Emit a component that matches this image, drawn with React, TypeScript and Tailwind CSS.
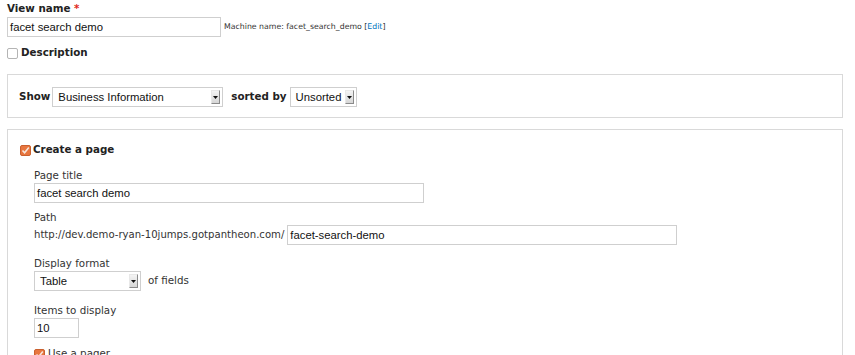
import React from "react";

const sans = { fontFamily: '"DejaVu Sans", Verdana, sans-serif' };

function Checkbox({ checked }: { checked?: boolean }) {
  if (checked) {
    return (
      <svg width="11" height="11" viewBox="0 0 11 11" className="shrink-0">
        <rect x="0.5" y="0.5" width="10" height="10" rx="1.5" fill="#e8763f" stroke="#c9602f" />
        <path d="M2.5 5.5 L4.6 7.8 L8.8 2.6" fill="none" stroke="#f6e7dc" strokeWidth="1.6" />
      </svg>
    );
  }
  return <span className="block w-[11px] h-[11px] shrink-0 rounded-[2px] border border-[#b4b4b4] bg-white" />;
}

function TextInput({ value, className }: { value: string; className: string }) {
  return (
    <div
      className={`h-[20px] border border-[#cfcfcf] bg-white pl-[2px] flex items-center text-[11.3px] text-[#111] ${className}`}
      style={{ fontFamily: '"Liberation Sans", Arial, sans-serif' }}
    >
      {value}
    </div>
  );
}

function Select({ value, className }: { value: string; className: string }) {
  return (
    <div
      className={`h-[20px] border border-[#cfcfcf] bg-white pl-[5px] pr-[2px] flex items-center justify-between text-[11.3px] text-[#111] ${className}`}
      style={{ fontFamily: '"Liberation Sans", Arial, sans-serif' }}
    >
      <span>{value}</span>
      <span className="w-[9px] h-[14px] bg-gradient-to-b from-[#f4f4f4] to-[#d6d6d6] border-r border-b border-[#8a8a8a] border-l border-t border-l-[#e8e8e8] border-t-[#e8e8e8] flex items-center justify-center">
        <svg width="5" height="3" viewBox="0 0 5 3">
          <path d="M0 0 H5 L2.5 3 Z" fill="#111" />
        </svg>
      </span>
    </div>
  );
}

export default function App() {
  return (
    <div className="w-[855px] h-[355px] overflow-hidden bg-white pl-[7px] pr-[12px] pt-[1px] text-[#222]" style={sans}>
      <div className="h-[14px] leading-[14px] text-[10.3px] font-bold">
        View name <span className="text-[#e0261b]">*</span>
      </div>
      <div className="mt-[2px] flex items-center">
        <TextInput value="facet search demo" className="w-[214px]" />
        <span className="ml-[3px] text-[7.8px] text-[#333]">
          Machine name: facet_search_demo [<span className="text-[#0074bd]">Edit</span>]
        </span>
      </div>
      <div className="mt-[10px] h-[12px] flex items-center gap-[3px]">
        <Checkbox />
        <span className="text-[10.3px] font-bold">Description</span>
      </div>

      <div className="mt-[15px] border border-[#d9d9d9] pl-[11px] pt-[12px] pb-[10px] flex items-center">
        <span className="text-[10.3px] font-bold">Show</span>
        <Select value="Business Information" className="ml-[2px] w-[171px]" />
        <span className="ml-[8px] text-[10.3px] font-bold">sorted by</span>
        <Select value="Unsorted" className="ml-[3px] w-[67px]" />
      </div>

      <div className="mt-[11px] border border-[#d9d9d9] border-b-0 pl-[12px] pt-[14px] h-[240px]">
        <div className="h-[12px] flex items-center gap-[2px]">
          <Checkbox checked />
          <span className="text-[10.3px] font-bold">Create a page</span>
        </div>
        <div className="ml-[14px] text-[10.3px] text-[#333]">
          <div className="mt-[12px] h-[14px] leading-[14px]">Page title</div>
          <TextInput value="facet search demo" className="mt-[1px] w-[390px]" />

          <div className="mt-[7px] h-[14px] leading-[14px]">Path</div>
          <div className="mt-[1px] flex items-center">
            <span className="text-[10.1px]">http://dev.demo-ryan-10jumps.gotpantheon.com/</span>
            <TextInput value="facet-search-demo" className="ml-[3px] w-[390px]" />
          </div>

          <div className="mt-[11px] h-[14px] leading-[14px]">Display format</div>
          <div className="mt-[1px] flex items-center">
            <Select value="Table" className="w-[107px]" />
            <span className="ml-[7px]">of fields</span>
          </div>

          <div className="mt-[12px] h-[14px] leading-[14px]">Items to display</div>
          <TextInput value="10" className="mt-[1px] w-[45px]" />

          <div className="mt-[10px] h-[12px] flex items-center gap-[3px]">
            <Checkbox checked />
            <span>Use a pager</span>
          </div>
        </div>
      </div>
    </div>
  );
}
